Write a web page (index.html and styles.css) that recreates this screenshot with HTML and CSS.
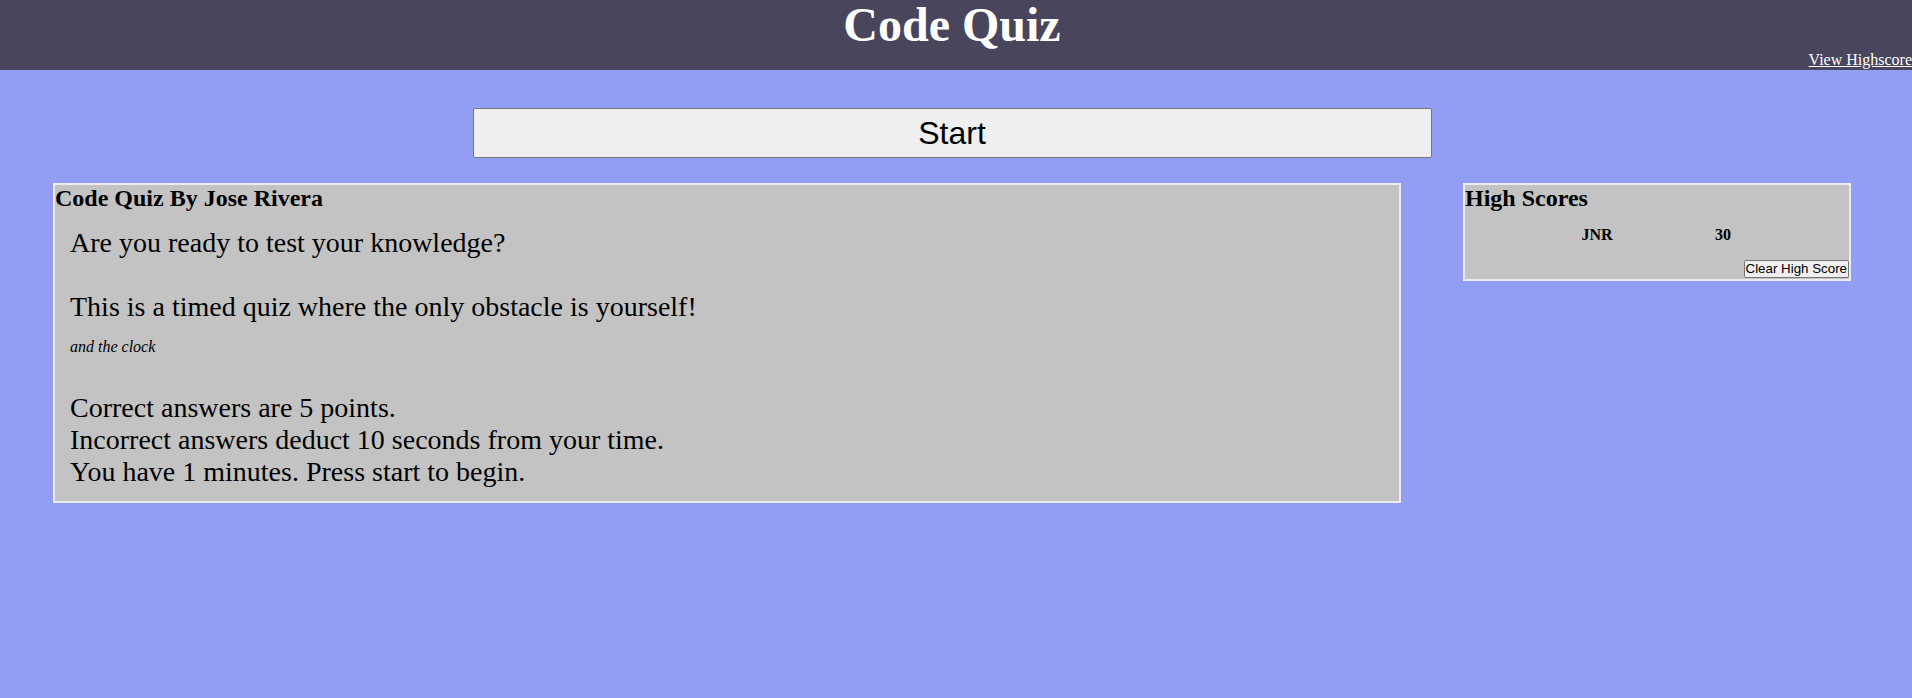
FILE: index.html
```html
<!DOCTYPE html>
<html lang="en">
<head>
<meta charset="utf-8">
<title>Code Quiz</title>
<link rel="stylesheet" href="styles.css">
</head>
<body>
<header class="site-header">
  <h1 class="site-title">Code Quiz</h1>
  <div class="header-links"><a class="highscore-link" href="#">View Highscore</a></div>
</header>
<main class="page">
  <div class="start-wrap">
    <button class="start-btn" type="button">Start</button>
  </div>
  <div class="content-row">
    <section class="card quiz-card">
      <h3 class="card-title">Code Quiz By Jose Rivera</h3>
      <div class="quiz-body">
        <p class="intro intro-first">Are you ready to test your knowledge?</p>
        <p class="intro intro-second">This is a timed quiz where the only obstacle is yourself!</p>
        <p class="aside"><em>and the clock</em></p>
        <p class="rules">Correct answers are 5 points.<br>Incorrect answers deduct 10 seconds from your time.<br>You have 1 minutes. Press start to begin.</p>
      </div>
    </section>
    <aside class="card score-card">
      <h3 class="card-title">High Scores</h3>
      <div class="score-row">
        <span class="score-cell">JNR</span>
        <span class="score-cell">30</span>
      </div>
      <div class="score-actions">
        <button class="clear-btn" type="button">Clear High Score</button>
      </div>
    </aside>
  </div>
</main>
</body>
</html>
```

FILE: styles.css
```css
* {
  box-sizing: border-box;
}

html, body {
  margin: 0;
  padding: 0;
}

body {
  background: #919ef3;
  font-family: "Liberation Serif", "Times New Roman", serif;
  color: #000;
  min-height: 698px;
}

.site-header {
  background: #48455d;
  height: 70px;
  display: flex;
  flex-direction: column;
}

.site-title {
  margin: 0;
  padding-right: 8px;
  text-align: center;
  color: #fff;
  font-size: 48px;
  font-weight: bold;
  line-height: 50px;
}

.header-links {
  text-align: right;
  line-height: 20px;
  font-size: 16px;
}

.highscore-link {
  color: #fff;
  text-decoration: underline;
}

.page {
  width: 1904px;
}

.start-wrap {
  display: flex;
  justify-content: center;
  padding-top: 38px;
}

.start-btn {
  width: 959px;
  height: 50px;
  background: #efefef;
  border: 1px solid #767676;
  border-radius: 2px;
  font-family: "Liberation Sans", Arial, sans-serif;
  font-size: 32px;
  color: #000;
  padding: 0;
}

.content-row {
  display: flex;
  align-items: flex-start;
  gap: 62px;
  padding-left: 53px;
  margin-top: 25px;
}

.card {
  background: #c3c3c3;
  border: 2px solid #ececec;
}

.quiz-card {
  width: 1348px;
  padding-bottom: 13px;
}

.score-card {
  width: 388px;
  padding-bottom: 1px;
}

.card-title {
  margin: 0;
  font-size: 24px;
  font-weight: bold;
  line-height: normal;
}

.quiz-body {
  padding: 0 15px;
}

.intro {
  margin: 0;
  font-size: 28px;
  line-height: normal;
}

.intro-first {
  margin-top: 15px;
}

.intro-second {
  margin-top: 32px;
}

.aside {
  margin: 15px 0 0;
  font-size: 16px;
  line-height: normal;
}

.rules {
  margin: 36px 0 0;
  font-size: 28px;
  line-height: normal;
}

.score-row {
  display: flex;
  margin-top: 14px;
  padding-left: 69px;
  font-weight: bold;
  font-size: 16px;
  line-height: normal;
}

.score-cell {
  width: 126px;
  text-align: center;
}

.score-actions {
  display: flex;
  justify-content: flex-end;
  margin-top: 16px;
}

.clear-btn {
  height: 18px;
  padding: 0 1px;
  background: #efefef;
  border: 1px solid #767676;
  border-radius: 2px;
  font-family: "Liberation Sans", Arial, sans-serif;
  font-size: 13.33px;
  line-height: 14px;
  color: #000;
}
```
